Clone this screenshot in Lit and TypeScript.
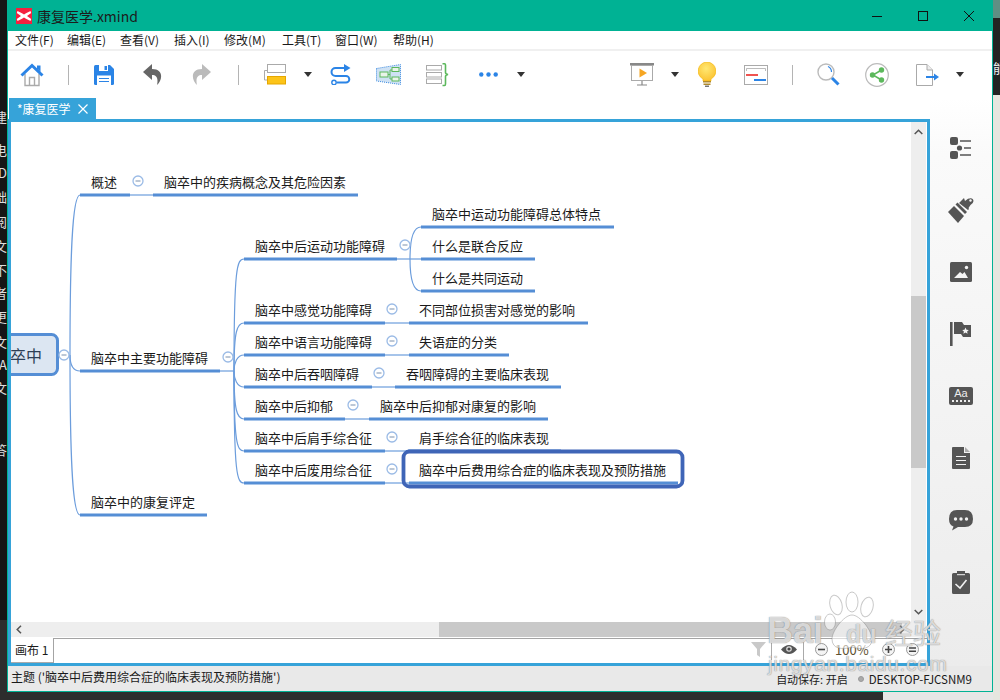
import { LitElement, html, css, svg } from "lit";
import { customElement } from "lit/decorators.js";

const GRAY = "#aaa";
const BLUE = "#2b84e6";
const GREEN = "#5cb85c";

type Tool = { x: number; w: number; icon: unknown };
const caret = (x: number): Tool => ({
  x, w: 8,
  icon: html`<svg width="8" height="5" viewBox="0 0 8 5"><path d="M0 0H8L4 5Z" fill="#333"/></svg>`,
});
const sep = (x: number): Tool => ({ x, w: 1, icon: html`<i class="tsep"></i>` });

const tools: Tool[] = [
  { x: 20, w: 24, icon: html`<svg width="24" height="24" viewBox="0 0 24 24">
      <path d="M5 11V22.5H19V11M9.5 22.5V14.5H14.5V22.5" fill="#fff" stroke="${GRAY}" stroke-width="1.4"/>
      <path d="M1.5 12.5L12 2.5L22.5 12.5" fill="none" stroke="${BLUE}" stroke-width="3"/>
      <path d="M17 2.5H20.5V9L17 5.5Z" fill="${BLUE}"/></svg>` },
  sep(68),
  { x: 94, w: 20, icon: html`<svg width="20" height="20" viewBox="0 0 20 20">
      <path d="M1.5 0H16L20 4V18.5Q20 20 18.5 20H1.5Q0 20 0 18.5V1.5Q0 0 1.5 0Z" fill="${BLUE}"/>
      <path d="M5 0H14V6H5Z" fill="#fff"/><path d="M10.5 1H13V5H10.5Z" fill="${BLUE}"/>
      <path d="M3 10.5H17V20H3Z" fill="#fff"/><path d="M5 13H15V14H5ZM5 16H15V17H5Z" fill="${BLUE}"/></svg>` },
  { x: 143, w: 19, icon: html`<svg width="19" height="21" viewBox="0 0 19 21">
      <path d="M9 0L0 8L9 16V11C13.5 11 15.5 14 14 21C19.5 16 21 5 9 5Z" fill="#666"/></svg>` },
  { x: 192, w: 19, icon: html`<svg width="19" height="21" viewBox="0 0 19 21">
      <path d="M10 0L19 8L10 16V11C5.5 11 3.5 14 5 21C-.5 16 -2 5 10 5Z" fill="#bbb"/></svg>` },
  sep(238),
  { x: 264, w: 22, icon: html`<svg width="22" height="21" viewBox="0 0 22 21">
      <path d="M3 6.5H.5V16H3" fill="none" stroke="${GRAY}"/>
      <rect x="3.5" y=".5" width="18" height="8" fill="#fff" stroke="${GRAY}"/>
      <rect x="3.5" y="12.5" width="18" height="7.5" fill="#fcc419" stroke="#e6a700"/></svg>` },
  caret(304),
  { x: 329, w: 23, icon: html`<svg width="23" height="21" viewBox="0 0 23 21">
      <path d="M15 4H6.5A4 4 0 0 0 6.5 12H17A3.3 3.3 0 0 1 17 18.6H7.5" fill="none" stroke="${BLUE}" stroke-width="2"/>
      <path d="M15 0L21.5 4L15 8Z" fill="${BLUE}"/>
      <circle cx="5" cy="18.5" r="2.2" fill="#fff" stroke="${BLUE}" stroke-width="1.4"/></svg>` },
  { x: 376, w: 25, icon: html`<svg width="25" height="21" viewBox="0 0 25 21">
      <path d="M.5 4.5L24.5 .5V20.5L.5 17Z" fill="#cfe2f4" stroke="#3d8be0" stroke-dasharray="1 1"/>
      <path d="M12 10.5H14M14 6V15M14 6H16M14 15H16" fill="none" stroke="${GREEN}"/>
      <rect x="4" y="8" width="8" height="5" fill="#eaf4ea" stroke="${GREEN}"/>
      <rect x="16" y="3.5" width="7" height="4" fill="#eaf4ea" stroke="${GREEN}"/>
      <rect x="16" y="13" width="7" height="4" fill="#eaf4ea" stroke="${GREEN}"/></svg>` },
  { x: 426, w: 24, icon: html`<svg width="24" height="24" viewBox="0 0 24 24">
      <g fill="#fff" stroke="${GRAY}"><rect x=".5" y="2.5" width="15" height="4.5"/><rect x=".5" y="9.5" width="15" height="4.5"/><rect x=".5" y="16" width="15" height="4.5"/></g>
      <path d="M16.5 .8H18.5Q19.5 .8 19.5 2V9.5Q19.5 11 22 11.5Q19.5 12 19.5 13.5V21Q19.5 22.5 18.5 22.5H16.5" fill="none" stroke="${GREEN}" stroke-width="1.6"/></svg>` },
  { x: 479, w: 19, icon: html`<svg width="19" height="5" viewBox="0 0 19 5"><g fill="${BLUE}"><circle cx="2.3" cy="2.5" r="2.2"/><circle cx="9.5" cy="2.5" r="2.2"/><circle cx="16.7" cy="2.5" r="2.2"/></g></svg>` },
  caret(517),
  { x: 630, w: 24, icon: html`<svg width="24" height="23" viewBox="0 0 24 23">
      <rect x="0" y="0" width="24" height="2.5" fill="#888"/>
      <rect x="1.5" y="2.5" width="21" height="15" fill="#fff" stroke="${GRAY}"/>
      <path d="M9.5 5.5L17 10L9.5 14.5Z" fill="#f6a623"/>
      <path d="M12 18V21.5M7 22H17" stroke="#888" stroke-width="1.2"/></svg>` },
  caret(671),
  { x: 698, w: 18, icon: html`<svg width="18" height="25" viewBox="0 0 18 25">
      <defs><radialGradient id="b" cx=".45" cy=".35" r=".7"><stop offset="0" stop-color="#ffe873"/><stop offset="1" stop-color="#fbc02d"/></radialGradient></defs>
      <path d="M9 0A9 9 0 0 1 13 17V19H5V17A9 9 0 0 1 9 0Z" fill="url(#b)" stroke="#f4b400" stroke-width=".6"/>
      <path d="M5 19H13V20.5H5ZM5.5 21.5H12.5V23H5.5Z" fill="#b08a2c"/><path d="M7 23.5H11V25H7Z" fill="#777"/></svg>` },
  { x: 744, w: 24, icon: html`<svg width="24" height="20" viewBox="0 0 24 20">
      <rect x=".5" y=".5" width="23" height="19" fill="#fff" stroke="${GRAY}"/>
      <path d="M2.5 6V3.5H21.5V6" fill="none" stroke="${GRAY}" stroke-width=".8"/>
      <rect x="2" y="9" width="12" height="2" fill="#ef5350"/><rect x="10" y="14" width="12" height="2" fill="${BLUE}"/></svg>` },
  sep(792),
  { x: 817, w: 23, icon: html`<svg width="23" height="23" viewBox="0 0 23 23">
      <circle cx="9" cy="9" r="8" fill="#fff" stroke="#bbb" stroke-width="1.4"/>
      <path d="M11 3.5A6 6 0 0 1 14.5 9" fill="none" stroke="${BLUE}" stroke-width="1.2"/>
      <path d="M15 15L21.5 21.5" stroke="${BLUE}" stroke-width="3"/></svg>` },
  { x: 865, w: 24, icon: html`<svg width="24" height="24" viewBox="0 0 24 24">
      <circle cx="12" cy="12" r="11.3" fill="#fff" stroke="#bbb" stroke-width="1.2"/>
      <path d="M16.5 7L8 12L16.5 17" fill="none" stroke="${GREEN}" stroke-width="1.5"/>
      <g fill="${GREEN}"><circle cx="16.5" cy="7" r="2.7"/><circle cx="7.5" cy="12" r="2.7"/><circle cx="16.5" cy="17" r="2.7"/></g></svg>` },
  { x: 916, w: 23, icon: html`<svg width="23" height="22" viewBox="0 0 23 22">
      <path d="M.5 .5H11L16.5 6V21.5H.5Z" fill="#fff" stroke="${GRAY}"/>
      <path d="M11 .5V6H16.5" fill="#eee" stroke="${GRAY}"/>
      <path d="M10 13H18" stroke="${BLUE}" stroke-width="2"/><path d="M18 9.5L23 13L18 16.5Z" fill="${BLUE}"/></svg>` },
  caret(956),
];

const menus: [string, number][] = [["文件(F)", 52], ["编辑(E)", 53], ["查看(V)", 54], ["插入(I)", 50], ["修改(M)", 58], ["工具(T)", 53], ["窗口(W)", 58], ["帮助(H)", 60]];

const side = [
  html`<svg width="22" height="22" viewBox="0 0 22 22"><rect x="0" y="0" width="8" height="8" rx="2"/><rect x="0" y="14" width="8" height="8" rx="2"/><circle cx="9.5" cy="11" r="2.6"/><path d="M10 3.3H21V4.8H10ZM14 10.3H21V11.8H14ZM10 17.3H21V18.8H10Z"/></svg>`,
  html`<svg width="26" height="26" viewBox="0 0 26 26"><path d="M0 15L6 9L16 19L10 26Z"/><path d="M7.5 7.5L9.5 5.5L19 15L17 17Z"/><path d="M11 5L16 0L17 3L20 .8Q25 -1 25.5 3Q25.5 5 22.5 7L20.5 10L21 11L20 12Z" transform="translate(0 1)"/><circle cx="22.5" cy="3.5" r="1.2" fill="#f6f6f6"/></svg>`,
  html`<svg width="22" height="20" viewBox="0 0 22 20"><rect width="22" height="20" rx="1.5"/><circle cx="16.5" cy="5.5" r="1.7" fill="#f5f5f5"/><path d="M4 16L10 10L12.5 12L14.5 10L18 16Z" fill="#f5f5f5"/></svg>`,
  html`<svg width="22" height="24" viewBox="0 0 22 24"><rect x="0" y="0" width="2.6" height="24"/><path d="M4 0H12L14 3H21V15H13L11 12H4Z"/><path d="M15.5 5.5L16.5 7.7L18.8 8L17.1 9.5L17.6 11.8L15.5 10.6L13.4 11.8L13.9 9.5L12.2 8L14.5 7.7Z" fill="#f5f5f5"/></svg>`,
  html`<div class="aa"><span>Aa</span><i></i></div>`,
  html`<svg width="18" height="22" viewBox="0 0 18 22"><path d="M1 0H12V6H18V21Q18 22 17 22H1Q0 22 0 21V1Q0 0 1 0Z"/><path d="M13 0L18 5H13Z" fill="#aaa"/><path d="M4 9H14V10H4ZM4 13H14V14H4ZM4 17H14V18H4Z" fill="#f3f3f3"/></svg>`,
  html`<svg width="24" height="21" viewBox="0 0 24 21"><path d="M8 0H16Q24 0 24 9Q24 17 16 17H9L3 20.5L4.5 16.5Q0 15 0 9Q0 0 8 0Z"/><g fill="#f1f1f1"><circle cx="6.5" cy="9" r="1.7"/><circle cx="12" cy="9" r="1.7"/><circle cx="17.5" cy="9" r="1.7"/></g></svg>`,
  html`<svg width="18" height="23" viewBox="0 0 18 23"><path d="M1.5 2H5V0H13V2H16.5Q18 2 18 3.5V21.5Q18 23 16.5 23H1.5Q0 23 0 21.5V3.5Q0 2 1.5 2Z"/><path d="M5 3.7H13" stroke="#f0f0f0"/><path d="M3.5 13L8 17L14.5 9" fill="none" stroke="#f0f0f0" stroke-width="1.6"/></svg>`,
];

/* Mind map, in page coordinates: [text, text x, line x1, line x2, line y] */
type Topic = [string, number, number, number, number];
const topics: Topic[] = [
  ["概述", 91, 80, 130, 195],
  ["脑卒中的疾病概念及其危险因素", 164, 153, 358, 195],
  ["脑卒中主要功能障碍", 91, 80, 220, 371],
  ["脑卒中的康复评定", 91, 80, 207, 515],
  ["脑卒中后运动功能障碍", 255, 244, 397, 259],
  ["脑卒中感觉功能障碍", 255, 244, 385, 323],
  ["脑卒中语言功能障碍", 255, 244, 385, 355],
  ["脑卒中后吞咽障碍", 255, 244, 372, 387],
  ["脑卒中后抑郁", 255, 244, 345, 419],
  ["脑卒中后肩手综合征", 255, 244, 385, 451],
  ["脑卒中后废用综合征", 255, 244, 385, 483],
  ["脑卒中运动功能障碍总体特点", 432, 421, 614, 227],
  ["什么是联合反应", 432, 421, 535, 259],
  ["什么是共同运动", 432, 421, 535, 291],
  ["不同部位损害对感觉的影响", 419, 409, 588, 323],
  ["失语症的分类", 419, 409, 509, 355],
  ["吞咽障碍的主要临床表现", 406, 395, 561, 387],
  ["脑卒中后抑郁对康复的影响", 380, 369, 548, 419],
  ["肩手综合征的临床表现", 419, 408, 561, 451],
  ["脑卒中后费用综合症的临床表现及预防措施", 419, 409, 678, 483],
];
const links = [
  "M130 195H153", "M385 323H409", "M385 355H409", "M372 387H395", "M345 419H369", "M385 451H408", "M385 483H409",
  "M220 371H234", "M397 259H410",
  "M70 355C70 260 72 195 80 195", "M70 355C70 364 73 371 80 371", "M70 355C70 450 72 515 80 515",
  ...[259, 323, 355, 387, 419, 451, 483].map((y) => `M234 371C234 ${y > 371 ? y - 8 : y + 8} 237 ${y} 244 ${y}`),
  "M410 259C410 238 413 227 421 227", "M410 259H421", "M410 259C410 280 413 291 421 291",
];
const dots: [number, number][] = [
  [64, 355], [138, 181], [228, 357], [405, 245], [392, 309], [392, 341], [379, 373], [353, 405], [392, 437], [392, 469],
];
const deskGlyphs: [string, number][] = [
  ["建", 117], ["电", 150], ["D", 173], ["础", 197], ["阅", 222], ["文", 246], ["不", 270], ["者", 293], ["更", 317], ["文", 342], ["A", 365], ["文", 388], ["答", 450],
];

@customElement("app-root")
export class AppRoot extends LitElement {
  static styles = css`
    :host { display: block; position: relative; width: 1000px; height: 700px; overflow: hidden; background: #2d2d2d;
      font-family: "Noto Sans CJK SC", "Liberation Sans", sans-serif; color: #1a1a1a; }
    .desk-left { position: absolute; left: 0; top: 0; width: 7px; height: 620px; background: #161616; overflow: hidden; }
    .desk-left span { position: absolute; right: 0; font-size: 13px; line-height: 16px; color: #ddd; white-space: nowrap; margin-top: -8px; }
    .desk-right { position: absolute; left: 993px; top: 0; width: 7px; height: 700px; background: #e6e6df; overflow: hidden; }
    .desk-right .d { background: #232323; height: 95px; position: relative; }
    .desk-right .t { position: absolute; top: 60px; left: 0; font-size: 13px; line-height: 16px; color: #eee; }
    .desk-right .c { position: absolute; top: 0; left: 0; right: 0; height: 18px; background: #5f8f84; }
    .desk-bottom { position: absolute; left: 883px; top: 692px; width: 110px; height: 8px; background: #e6e6e6; }
    .window { position: absolute; left: 7px; top: 0; width: 986px; height: 692px; box-sizing: border-box; border: 1px solid #00b294; border-top: 0;
      display: flex; flex-direction: column; background: #fff; }
    .title { height: 31px; flex: none; background: #00b294; display: flex; align-items: center; padding-left: 8px; font-size: 14px; color: #1c1c1c; }
    .logo { width: 16px; height: 16px; margin-right: 5px; flex: none; display: block; }
    .title .name { flex: 1; }
    .wc { width: 46px; height: 31px; display: flex; align-items: center; justify-content: center; }
    .menu { height: 18px; flex: none; display: flex; font-size: 12px; line-height: 18px; padding-left: 7px; }
    .menu span { white-space: nowrap; flex: none; }
    .sep2 { height: 2px; flex: none; background: #f0f0f0; }
    .toolbar { height: 47px; flex: none; display: flex; align-items: center; }
    .tool { display: flex; align-items: center; justify-content: center; flex: none; }
    .tool svg { display: block; }
    .tsep { display: block; width: 1px; height: 20px; background: #b4b4b4; }
    .main { flex: 1; display: flex; min-height: 0; }
    .left { width: 922px; flex: none; display: flex; flex-direction: column; }
    .tabs { height: 21px; flex: none; padding-left: 1px; display: flex; }
    .tab { width: 87px; background: #36a3d9; color: #fff; font-size: 12px; line-height: 21px; padding-left: 8px; box-sizing: border-box;
      display: flex; align-items: center; gap: 7px; }
    .editor { flex: 1; border: 3px solid #36a3d9; display: flex; flex-direction: column; min-height: 0; }
    .scroller { flex: 1; display: grid; grid-template-columns: 900px 15px 1px; grid-template-rows: 500px 15px; background: #fff; }
    .canvas { position: relative; overflow: hidden; background: #fff; }
    .canvas svg { position: absolute; left: 0; top: 0; }
    .topic { position: absolute; font-size: 13px; line-height: 20px; white-space: nowrap; color: #1a1a1a; }
    .root { position: absolute; font-size: 16px; line-height: 24px; color: #2e3f55; white-space: nowrap; }
    .vbar { grid-column: 2; grid-row: 1 / span 2; background: #eee; position: relative; }
    .vthumb { position: absolute; left: 0; right: 0; top: 174px; height: 172px; background: #c9c9c9; }
    .hbar { grid-column: 1; grid-row: 2; background: #eee; position: relative; }
    .hthumb { position: absolute; left: 428px; right: 9px; top: 0; bottom: 0; background: #c9c9c9; }
    .arr { position: absolute; display: block; }
    .arr.up { left: 3px; top: 7px; } .arr.down { left: 3px; bottom: 22px; }
    .arr.l { left: 5px; top: 3px; } .arr.r { right: 6px; top: 3px; }
    .sheets { height: 26px; flex: none; display: flex; font-size: 12px; }
    .sheet { width: 42px; flex: none; box-sizing: border-box; border-bottom: 1px solid #aaa; padding-left: 4px; line-height: 26px; white-space: nowrap; }
    .sheetrest { flex: 1; border-top: 1px solid #a4a4a4; border-left: 1px solid #a4a4a4; margin-top: 1px; padding: 0 8px 3px 0; display: flex; align-items: center; justify-content: flex-end; }
    .sheetrest svg { display: block; flex: none; }
    .vs { width: 1px; height: 20px; background: #aaa; flex: none; }
    .filter { margin-right: 5px; } .eye { margin: 0 6px 0 9px; }
    .zb { margin-left: 11px; }
    .pct { width: 32px; margin: 0 15px 0 7px; text-align: center; color: #5e5030; font-size: 13px; white-space: nowrap; }
    .zb3 { margin-left: 11px; }
    .panel { flex: 1; padding-top: 19px; background: linear-gradient(#fff, #fafafa 10%, #ececec); }
    .cell { height: 62px; display: flex; align-items: center; justify-content: center; fill: #555; }
    .cell svg { display: block; }
    .aa { width: 24px; height: 18px; background: #555; border-radius: 2px; color: #eee; font-size: 11px; line-height: 13px; text-align: center; font-family: "Liberation Sans", sans-serif; }
    .aa span { display: block; }
    .aa i { display: block; margin: 0 3px; border-top: 2px dotted #eee; }
    .status { height: 25px; flex: none; background: #e9e9e9; display: flex; align-items: center; font-size: 12px; padding: 0 20px 0 3px; color: #1a1a1a; }
    .status .msg { flex: 1; margin-top: -4px; }
    .status .save { margin-right: 10px; font-size: 11px; }
    .status .dot { width: 6px; height: 6px; border-radius: 50%; background: #aaa; border: 1px solid #999; box-sizing: border-box; margin-right: 5px; }
    .status .host { font-size: 11.5px; }
    .wm { position: absolute; left: 760px; top: 585px; width: 195px; height: 95px; pointer-events: none; color: rgba(255,255,255,.7); }
    .wm svg { position: absolute; left: 0; top: 0; }
    .wm span { position: absolute; white-space: nowrap; text-shadow: 0 0 1px rgba(110,110,110,.6), 0 0 1px rgba(110,110,110,.6); }
    .wm .bai { left: 7px; top: 24px; font: bold 36px/44px "Liberation Sans", sans-serif; }
    .wm .du { left: 86px; top: 35px; font: bold 25px/28px "Liberation Sans", sans-serif; }
    .wm .jy { left: 125px; top: 28px; font-size: 28px; line-height: 38px; }
    .wm .url { left: 8px; top: 66px; font: 21px/26px "Liberation Sans", sans-serif; letter-spacing: .6px; }
  `;

  private topicsView() {
    return topics.map(([t, x, , , y]) => html`<div class="topic" style="left:${x - 11}px;top:${y - 122 - 23}px">${t}</div>`);
  }

  private mapSvg() {
    return html`<svg width="900" height="500" viewBox="11 122 900 500">
      ${svg`<path d="M57 355H70" stroke="#9dbbe6" fill="none"/>`}
      ${links.map((d) => svg`<path d=${d} stroke="#6c9ddc" stroke-width="1.2" fill="none"/>`)}
      ${topics.map(([, , a, b, y]) => svg`<rect x=${a} y=${y - 1.5} width=${b - a} height="3" fill="#558ed5"/>`)}
      <rect x="-12" y="334.5" width="69.5" height="40" rx="6" fill="#dce6f2" stroke="#558ed5" stroke-width="3"/>
      <rect x="403.5" y="451.5" width="279" height="35" rx="6" fill="none" stroke="#3f65b7" stroke-width="3.8"/>
      ${dots.map(([x, y]) => svg`<circle cx=${x} cy=${y} r="5" fill="#fff" stroke="#9bbbe6" stroke-width="1.3"/><path d=${`M${x - 2.5} ${y}H${x + 2.5}`} stroke="#7b90ad"/>`)}
    </svg>`;
  }

  private toolbar() {
    let end = 8;
    return tools.map((t) => {
      const m = t.x - end;
      end = t.x + t.w;
      return html`<span class="tool" style="margin-left:${m}px;width:${t.w}px">${t.icon}</span>`;
    });
  }

  render() {
    return html`
      <div class="desk-left">${deskGlyphs.map(([g, y]) => html`<span style="top:${y}px">${g}</span>`)}</div>
      <div class="desk-right"><div class="d"><div class="c"></div><div class="t">能</div></div></div>
      <div class="desk-bottom"></div>
      <div class="window">
        <div class="title">
          <svg class="logo" viewBox="0 0 16 16"><rect width="16" height="16" fill="#f5203f"/><path d="M1.5 3L6 5.3L8 6.6L10 5.3L14.5 3L15.2 5L11 8L15.2 11L14.5 13L10 10.7L8 9.4L6 10.7L1.5 13L.8 11L5 8L.8 5Z" fill="#fff"/></svg>
          <span class="name">康复医学.xmind</span>
          <span class="wc"><svg width="12" height="12" viewBox="0 0 12 12"><path d="M1 6.5H11" stroke="#111" stroke-width="1"/></svg></span>
          <span class="wc"><svg width="12" height="12" viewBox="0 0 12 12"><rect x="1.5" y="1.5" width="9" height="9" fill="none" stroke="#111"/></svg></span>
          <span class="wc"><svg width="12" height="12" viewBox="0 0 12 12"><path d="M1 1L11 11M11 1L1 11" stroke="#111"/></svg></span>
        </div>
        <div class="menu">${menus.map(([m, w]) => html`<span style="width:${w}px">${m}</span>`)}</div>
        <div class="sep2"></div>
        <div class="toolbar">${this.toolbar()}</div>
        <div class="main">
          <div class="left">
            <div class="tabs"><div class="tab"><span>*康复医学</span>
              <svg width="10" height="10" viewBox="0 0 10 10"><path d="M.5 .5L9.5 9.5M9.5 .5L.5 9.5" stroke="#fff" stroke-width="1.2"/></svg></div></div>
            <div class="editor">
              <div class="scroller">
                <div class="canvas">
                  ${this.mapSvg()}
                  <div class="root" style="left:${-6 - 11}px;top:${355 - 122 - 12}px">脑卒中</div>
                  ${this.topicsView()}
                </div>
                <div class="vbar">
                  <svg class="arr up" width="9" height="6" viewBox="0 0 9 6"><path d="M.7 5L4.5 1.2L8.3 5" fill="none" stroke="#555" stroke-width="1.5"/></svg>
                  <div class="vthumb"></div>
                  <svg class="arr down" width="9" height="6" viewBox="0 0 9 6"><path d="M.7 1L4.5 4.8L8.3 1" fill="none" stroke="#555" stroke-width="1.5"/></svg>
                </div>
                <div class="hbar">
                  <svg class="arr l" width="6" height="9" viewBox="0 0 6 9"><path d="M5 .7L1.2 4.5L5 8.3" fill="none" stroke="#555" stroke-width="1.5"/></svg>
                  <div class="hthumb"></div>
                  <svg class="arr r" width="6" height="9" viewBox="0 0 6 9"><path d="M1 .7L4.8 4.5L1 8.3" fill="none" stroke="#777" stroke-width="1.5"/></svg>
                </div>
              </div>
              <div class="sheets">
                <div class="sheet">画布 1</div>
                <div class="sheetrest">
                  <svg class="filter" width="15" height="15" viewBox="0 0 15 15"><path d="M0 0H15L9 7V15L6 13V7Z" fill="#c9c9c9"/></svg>
                  <i class="vs"></i>
                  <svg class="eye" width="16" height="11" viewBox="0 0 16 11"><path d="M0 5.5Q8 -3.5 16 5.5Q8 14.5 0 5.5Z" fill="#555"/><circle cx="8" cy="5" r="2.8" fill="#ddd"/><circle cx="8" cy="5" r="1.6" fill="#444"/></svg>
                  <i class="vs"></i>
                  <svg class="zb" width="13" height="13" viewBox="0 0 13 13"><circle cx="6.5" cy="6.5" r="6" fill="#f4f4f4" stroke="#999"/><path d="M3 6.5H10" stroke="#444" stroke-width="1.6"/></svg>
                  <span class="pct">100%</span>
                  <svg width="13" height="13" viewBox="0 0 13 13"><circle cx="6.5" cy="6.5" r="6" fill="#f4f4f4" stroke="#999"/><path d="M3 6.5H10M6.5 3V10" stroke="#444" stroke-width="1.6"/></svg>
                  <svg class="zb3" width="13" height="13" viewBox="0 0 13 13"><circle cx="6.5" cy="6.5" r="6" fill="#f4f4f4" stroke="#999"/><path d="M3 5H10M3 8.2H10" stroke="#444" stroke-width="1.5"/></svg>
                </div>
              </div>
            </div>
          </div>
          <div class="panel">${side.map((s) => html`<div class="cell">${s}</div>`)}</div>
        </div>
        <div class="status">
          <span class="msg">主题 ('脑卒中后费用综合症的临床表现及预防措施')</span>
          <span class="save">自动保存: 开启</span><i class="dot"></i><span class="host">DESKTOP-FJCSNM9</span>
        </div>
      </div>
      <div class="wm">
        <svg width="195" height="70" viewBox="0 0 195 70" fill="rgba(255,255,255,.6)" stroke="rgba(120,120,120,.4)">
          <ellipse cx="76" cy="20" rx="6" ry="10" transform="rotate(-15 76 20)"/>
          <ellipse cx="92" cy="17" rx="6" ry="10"/>
          <ellipse cx="107" cy="22" rx="6" ry="10" transform="rotate(15 107 22)"/>
          <ellipse cx="70" cy="37" rx="5.5" ry="8"/>
          <path d="M92 30C100 30 112 46 112 54C112 64 102 65 92 62C82 65 72 64 72 54C72 46 84 30 92 30Z"/>
        </svg>
        <span class="bai">Bai</span><span class="du">du</span><span class="jy">经验</span>
        <span class="url">jingyan.baidu.com</span>
      </div>
    `;
  }
}
